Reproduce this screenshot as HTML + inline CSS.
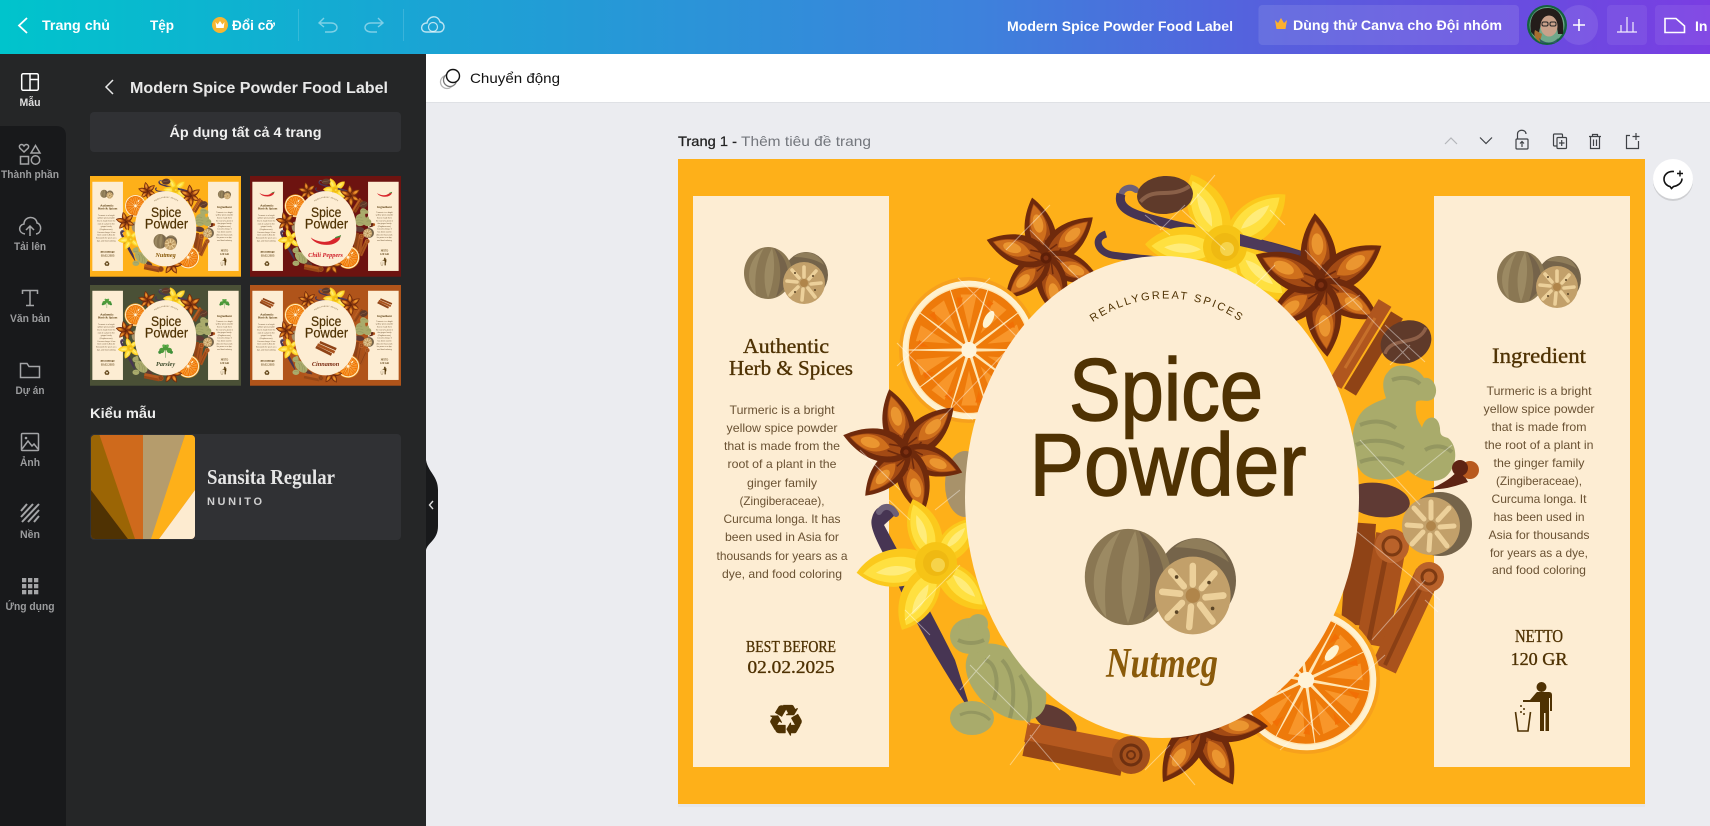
<!DOCTYPE html>
<html lang="vi"><head><meta charset="utf-8"><title>Modern Spice Powder Food Label</title>
<style>
html,body{margin:0;padding:0;width:1710px;height:826px;overflow:hidden;background:#ebecf0}
svg{display:block}
text{font-family:"Liberation Sans","Noto Sans CJK SC",sans-serif}
.sf{font-family:"Liberation Serif","Noto Serif CJK SC",serif}
.dj{font-family:"DejaVu Sans",sans-serif}
.nav{font-size:11px;font-weight:700;fill:#9b9c9e;text-anchor:middle}
.ni{fill:none;stroke:#a4a5a7;stroke-width:1.5}
.tb{fill:#fff;font-size:14px;font-weight:700}
.b{font-size:12px;fill:#6a5233;text-anchor:middle}
.h{fill:#4f3203;text-anchor:middle;stroke:#4f3203;stroke-width:.35}
</style></head><body>
<svg xmlns="http://www.w3.org/2000/svg" width="1710" height="826" viewBox="0 0 1710 826">
<defs>
<linearGradient id="top" x1="0" x2="1" y1="0" y2="0">
<stop offset="0" stop-color="#00c4cc"/><stop offset=".25" stop-color="#1aa4d4"/><stop offset=".57" stop-color="#3d82dc"/><stop offset=".74" stop-color="#5660dd"/><stop offset=".9" stop-color="#6a4be0"/><stop offset="1" stop-color="#7a3de2"/>
</linearGradient>
<g id="pod">
<path d="M0,10C-32,-12 -34,-58 0,-100C34,-58 32,-12 0,10Z" fill="#6f2a0c"/>
<path d="M-2,-4C-20,-22 -22,-58 0,-90C22,-58 20,-22 -2,-4Z" fill="#a34a14"/>
<path d="M0,-26C-16,-42 -17,-62 0,-88C17,-62 16,-42 0,-26Z" fill="#cf6f1c"/>
<ellipse cx="0" cy="-57" rx="8" ry="15" fill="#eb9630"/>
<path d="M-7,-6L-5,-28M7,-6L5,-28" stroke="#6f2a0c" stroke-width="2.500"/>
</g>
<g id="star">
<use href="#pod"/><use href="#pod" transform="rotate(62)"/><use href="#pod" transform="rotate(125) scale(.92)"/><use href="#pod" transform="rotate(180)"/><use href="#pod" transform="rotate(238) scale(.92)"/><use href="#pod" transform="rotate(300)"/>
<circle r="9" fill="#5d1f08"/><circle r="4" fill="#7d3012"/>
</g>
<g id="seg"><path d="M0,-7L-26,-82A86,86 0 0 1 26,-82Z" fill="#ee7a0a"/><path d="M0,-28L-12,-76L11,-76Z" fill="#f8962a"/><path d="M-14,-56L-18,-72L-9,-72Z" fill="#f26f05"/></g>
<g id="orange">
<circle r="100" fill="#f7a11c"/><circle r="95" fill="#fff1cf"/><circle r="88" fill="#ffe6b4"/>
<use href="#seg"/><use href="#seg" transform="rotate(36)"/><use href="#seg" transform="rotate(72)"/><use href="#seg" transform="rotate(108)"/><use href="#seg" transform="rotate(144)"/><use href="#seg" transform="rotate(180)"/><use href="#seg" transform="rotate(216)"/><use href="#seg" transform="rotate(252)"/><use href="#seg" transform="rotate(288)"/><use href="#seg" transform="rotate(324)"/>
<circle r="11" fill="#fff3d8"/>
<ellipse cx="28" cy="-42" rx="6" ry="13" fill="#fff3d0" transform="rotate(30 28 -42)"/>
</g>
<g id="pet">
<path d="M0,0C-30,-20 -33,-70 0,-100C33,-70 30,-20 0,0Z" fill="#fbc91c"/>
<path d="M-3,-10C-24,-30 -24,-65 -2,-92C20,-66 18,-30 -3,-10Z" fill="#ffe040"/>
<path d="M-4,-30C-12,-45 -10,-62 -3,-76C5,-60 4,-45 -4,-30Z" fill="#ffec7a"/>
</g>
<g id="nut">
<ellipse cx="38" cy="2" rx="22" ry="23" fill="#75644a"/>
<path d="M26,-16C34,-24 50,-22 56,-8C48,-14 36,-16 26,-16Z" fill="#8f7d5a"/>
<ellipse cx="0" cy="0" rx="24" ry="26" fill="#8a7753"/>
<path d="M-4,-25C-20,-14 -24,8 -12,22C-14,6 -12,-12 -4,-25ZM4,-25C-4,-10 -6,8 0,25C6,10 8,-10 4,-25Z" fill="#9c8a63"/>
<path d="M6,-25C16,-18 22,-6 20,10C16,16 12,20 8,24C14,6 14,-10 6,-25Z" fill="#75634a"/>
<circle cx="36" cy="10" r="21" fill="#c2a06a"/>
<g stroke="#ecd09a" stroke-width="3.600" stroke-linecap="round"><path d="M36,4V-6M41,6L48,-2M43,11L53,10M40,15L47,24M35,16L34,27M30,14L22,22M29,9L19,8M31,5L24,-3"/></g>
<circle cx="36" cy="10" r="4" fill="#b0854a"/>
<circle cx="27" cy="0" r="1" fill="#5b4526"/><circle cx="47" cy="17" r="1" fill="#5b4526"/><circle cx="45" cy="3" r="1" fill="#5b4526"/><circle cx="27" cy="19" r="1" fill="#5b4526"/>
</g>
<g id="art">
<!-- pods -->
<path d="M1121,196C1122,187 1131,186 1136,190" fill="none" stroke="#6d6078" stroke-width="6" stroke-linecap="round"/>
<path d="M1121,194C1116,212 1140,216 1170,224C1200,232 1240,236 1303,256" fill="none" stroke="#473553" stroke-width="9"/>
<path d="M1106,234C1093,238 1097,252 1112,255C1130,258 1150,258 1170,262" fill="none" stroke="#473553" stroke-width="7"/>
<use href="#star" transform="translate(1046,258) rotate(-13) scale(.62)"/>
<g transform="translate(969,350) scale(.7,.73)"><use href="#orange"/></g>
<!-- flower 1 -->
<g transform="translate(1225,247)">
<use href="#pet" transform="rotate(-25) scale(.8)"/><use href="#pet" transform="rotate(49) scale(.8)"/><use href="#pet" transform="rotate(-88) scale(.8)"/><use href="#pet" transform="rotate(130) scale(.8)"/><use href="#pet" transform="rotate(180) scale(.7)"/>
<circle r="22" fill="#f6c416"/><circle r="14" fill="#efb912"/><circle cx="2" cy="2" r="7" fill="#f6d34a"/>
</g>
<!-- bean 1 -->
<g transform="rotate(-4 1165 195)"><ellipse cx="1165" cy="195" rx="28" ry="19" fill="#5f3a2a"/><path d="M1140,200C1155,185 1170,200 1190,188" fill="none" stroke="#8a6048" stroke-width="4"/></g>
<path d="M1240,234L1303,252L1292,258L1240,246Z" fill="#4d3a5a"/>
<use href="#star" transform="translate(1321,285) rotate(-5) scale(.72)"/>
<!-- cinnamon right upper -->
<path d="M1385,303L1335,385" stroke="#b0561e" stroke-width="15"/><path d="M1397,315L1350,392" stroke="#8f4316" stroke-width="14"/><path d="M1375,318L1345,368" stroke="#c66f2a" stroke-width="3"/>
<!-- bean 2 -->
<g transform="rotate(-22 1406 342)"><ellipse cx="1406" cy="342" rx="26" ry="21" fill="#5f3a2a"/><path d="M1382,345C1395,330 1415,352 1430,336" fill="none" stroke="#8e6048" stroke-width="3.500"/></g>
<!-- bean 3 -->
<ellipse cx="1378" cy="500" rx="32" ry="17" fill="#5f3a34" transform="rotate(8 1378 500)"/>
<!-- cinnamon 3 -->
<path d="M1362,523L1355,625" stroke="#8f4316" stroke-width="28"/>
<path d="M1392,535L1372,645" stroke="#a9521c" stroke-width="32"/><path d="M1388,545L1369,640" stroke="#8a3f14" stroke-width="5"/>
<circle cx="1392" cy="546" r="17" fill="#b9622a"/><circle cx="1392" cy="546" r="9" fill="none" stroke="#7d3a12" stroke-width="3"/>
<path d="M1428,574L1384,668" stroke="#a9521c" stroke-width="26"/><path d="M1420,590L1385,665" stroke="#8a3f14" stroke-width="4"/>
<circle cx="1429" cy="577" r="15" fill="#b9622a"/><circle cx="1429" cy="577" r="7" fill="none" stroke="#7d3a12" stroke-width="3"/>
<!-- ginger right -->
<path d="M1388,372C1396,360 1418,366 1424,378C1432,376 1440,388 1434,398C1428,404 1420,398 1416,402C1414,420 1422,425 1422,428C1424,416 1438,412 1440,428C1440,436 1442,436 1448,438C1460,448 1456,470 1444,478C1430,486 1414,476 1408,470C1396,482 1370,484 1360,470C1348,454 1350,420 1366,408C1378,400 1384,400 1386,398C1382,388 1382,378 1388,372Z" fill="#a9ab6b"/>
<path d="M1360,425C1372,420 1385,420 1396,428M1356,445C1370,438 1390,440 1404,448M1360,462C1375,456 1392,458 1404,464M1392,380C1402,376 1414,378 1420,384M1425,450C1435,444 1445,446 1452,452" fill="none" stroke="#949760" stroke-width="4"/>
<!-- clove -->
<path d="M1431,489C1445,482 1452,478 1460,468L1468,482C1455,486 1445,490 1431,489Z" fill="#5e2413"/><circle cx="1470" cy="470" r="9" fill="#b85a1e"/><circle cx="1460" cy="468" r="8" fill="#5e2413"/>
<!-- right nut -->
<circle cx="1440" cy="524" r="32" fill="#75644a"/>
<circle cx="1431" cy="526" r="29" fill="#c2a06a"/>
<g stroke="#ecd09a" stroke-width="5" stroke-linecap="round"><path d="M1431,518V502M1438,520L1449,508M1440,527L1454,526M1437,533L1447,546M1430,535L1429,550M1423,532L1412,544M1421,526L1407,525M1424,519L1414,508"/></g>
<circle cx="1431" cy="526" r="5" fill="#b0854a"/>
<!-- orange 2 -->
<g transform="translate(1306,680) scale(.74) rotate(10)"><use href="#orange"/></g>
<use href="#star" transform="translate(1200,725) rotate(151) scale(.68)"/>
<!-- star C -->
<ellipse cx="965" cy="484" rx="20" ry="33" fill="#a8926a"/>
<use href="#star" transform="translate(906,452) rotate(-15) scale(.65)"/>
<!-- left pod -->
<path d="M895,515C887,501 875,505 872,518C868,530 884,552 896,580C915,625 950,680 972,714L955,660C925,600 900,555 884,525" fill="#473553"/>
<path d="M879,512C884,504 892,506 896,514" fill="none" stroke="#6d6078" stroke-width="6" stroke-linecap="round"/>
<!-- flower 2 -->
<g transform="translate(936,563)">
<use href="#pet" transform="rotate(-20) scale(.68)"/><use href="#pet" transform="rotate(-97) scale(.8)"/><use href="#pet" transform="rotate(207) scale(.75)"/><use href="#pet" transform="rotate(42) scale(.6)"/><use href="#pet" transform="rotate(133) scale(.68)"/>
<circle r="21" fill="#f6c416"/><circle r="13" fill="#efb912"/><circle cx="2" cy="2" r="7" fill="#f6d34a"/>
</g>
<ellipse cx="1055" cy="720" rx="24" ry="12" fill="#5f3a34" transform="rotate(30 1055 720)"/>
<!-- ginger left -->
<ellipse cx="1006" cy="682" rx="47" ry="30" fill="#a9ab6b" transform="rotate(42 1006 682)"/>
<ellipse cx="970" cy="636" rx="20" ry="18" fill="#a9ab6b"/>
<ellipse cx="972" cy="718" rx="22" ry="17" fill="#a9ab6b"/>
<circle cx="978" cy="624" r="10" fill="#a9ab6b"/>
<path d="M985,660C995,662 1000,680 994,700M1002,660C1014,672 1016,695 1010,718M1020,675C1030,690 1032,705 1028,722M958,640C966,644 976,644 984,640" fill="none" stroke="#949760" stroke-width="4"/>
<path d="M960,715C970,710 982,712 990,720" fill="none" stroke="#949760" stroke-width="3"/>
<!-- cinnamon bottom -->
<path d="M1026,732L1130,752" stroke="#b5591f" stroke-width="20"/><path d="M1024,748L1122,768" stroke="#974716" stroke-width="16"/>
<circle cx="1131" cy="755" r="19" fill="#a3501c"/><circle cx="1131" cy="755" r="10" fill="none" stroke="#6e3010" stroke-width="3"/><circle cx="1131" cy="755" r="4" fill="none" stroke="#6e3010" stroke-width="2"/>
</g>
<g id="lat" stroke="#fff" stroke-opacity=".42" stroke-width="1" fill="none">
<path d="M897,343L973,420M897,366L990,278M958,278L1020,340M940,420L1012,345"/>
<path d="M1030,230L1090,290M1006,250L1050,205M1145,215L1170,235M1160,230L1185,205"/>
<path d="M1215,175L1190,205M1182,210L1225,250M1275,265L1250,290M1270,210L1285,225"/>
<path d="M1305,250L1410,360M1310,330L1360,295M1390,365L1410,345M1385,325L1425,362M1360,440L1420,505M1415,475L1452,445"/>
<path d="M1355,530L1440,600M1372,640L1425,580M1425,600L1438,612M1280,750L1385,655M1250,655L1320,735"/>
<path d="M1145,770L1170,745M1040,725L1010,765M1030,735L1060,770M1170,755L1195,785"/>
<path d="M889,500L910,520M860,450L900,490M935,510L960,490M905,620L960,565M905,610L930,635M960,690L990,655M970,665L1030,725"/>
</g>
<g id="pan">
<rect x="693" y="196" width="196" height="571" fill="#fdedd3"/>
<rect x="1434" y="196" width="196" height="571" fill="#fdedd3"/>
</g>
<g id="txt">
<ellipse cx="1162" cy="497" rx="197" ry="241" fill="#fdedd3"/>
<text class="sf h" x="786" y="353" font-size="21" textLength="86" lengthAdjust="spacingAndGlyphs">Authentic</text>
<text class="sf h" x="791" y="375" font-size="21" textLength="124" lengthAdjust="spacingAndGlyphs">Herb &amp; Spices</text>
<text class="b" x="782" y="414" textLength="105" lengthAdjust="spacingAndGlyphs">Turmeric is a bright</text>
<text class="b" x="782" y="432" textLength="111" lengthAdjust="spacingAndGlyphs">yellow spice powder</text>
<text class="b" x="782" y="450" textLength="116" lengthAdjust="spacingAndGlyphs">that is made from the</text>
<text class="b" x="782" y="468" textLength="109" lengthAdjust="spacingAndGlyphs">root of a plant in the</text>
<text class="b" x="782" y="487" textLength="70" lengthAdjust="spacingAndGlyphs">ginger family</text>
<text class="b" x="782" y="505" textLength="85" lengthAdjust="spacingAndGlyphs">(Zingiberaceae),</text>
<text class="b" x="782" y="523" textLength="117" lengthAdjust="spacingAndGlyphs">Curcuma longa. It has</text>
<text class="b" x="782" y="541" textLength="114" lengthAdjust="spacingAndGlyphs">been used in Asia for</text>
<text class="b" x="782" y="560" textLength="131" lengthAdjust="spacingAndGlyphs">thousands for years as a</text>
<text class="b" x="782" y="578" textLength="120" lengthAdjust="spacingAndGlyphs">dye, and food coloring</text>
<text class="sf h" x="791" y="652" font-size="17" textLength="90" lengthAdjust="spacingAndGlyphs">BEST BEFORE</text>
<text class="sf h" x="791" y="673" font-size="18" textLength="87" lengthAdjust="spacingAndGlyphs">02.02.2025</text>
<text class="dj h" x="786" y="735" font-size="42" style="stroke-width:1.1">♻</text>
<text class="sf h" x="1539" y="363" font-size="22" textLength="94" lengthAdjust="spacingAndGlyphs">Ingredient</text>
<text class="b" x="1539" y="395" textLength="105" lengthAdjust="spacingAndGlyphs">Turmeric is a bright</text>
<text class="b" x="1539" y="413" textLength="111" lengthAdjust="spacingAndGlyphs">yellow spice powder</text>
<text class="b" x="1539" y="431" textLength="95" lengthAdjust="spacingAndGlyphs">that is made from</text>
<text class="b" x="1539" y="449" textLength="109" lengthAdjust="spacingAndGlyphs">the root of a plant in</text>
<text class="b" x="1539" y="467" textLength="91" lengthAdjust="spacingAndGlyphs">the ginger family</text>
<text class="b" x="1539" y="485" textLength="86" lengthAdjust="spacingAndGlyphs">(Zingiberaceae),</text>
<text class="b" x="1539" y="503" textLength="95" lengthAdjust="spacingAndGlyphs">Curcuma longa. It</text>
<text class="b" x="1539" y="521" textLength="91" lengthAdjust="spacingAndGlyphs">has been used in</text>
<text class="b" x="1539" y="539" textLength="101" lengthAdjust="spacingAndGlyphs">Asia for thousands</text>
<text class="b" x="1539" y="557" textLength="98" lengthAdjust="spacingAndGlyphs">for years as a dye,</text>
<text class="b" x="1539" y="574" textLength="94" lengthAdjust="spacingAndGlyphs">and food coloring</text>
<text class="sf h" x="1539" y="642" font-size="18" textLength="48" lengthAdjust="spacingAndGlyphs">NETTO</text>
<text class="sf h" x="1539" y="665" font-size="18" textLength="57" lengthAdjust="spacingAndGlyphs">120 GR</text>
<g fill="#4f3203">
<circle cx="1541.5" cy="687" r="5"/>
<path d="M1537,692H1549Q1552,692 1552,695V711H1550V698H1549V731H1545.500V713H1544V731H1540V702L1531,702H1523V700H1530L1536,693Z"/>
<circle cx="1521" cy="706" r="1"/><circle cx="1524" cy="709" r="1"/><circle cx="1521" cy="712" r="1"/><circle cx="1524" cy="714" r="1"/>
</g>
<path d="M1515.500,712L1518,731H1528L1530.500,712" fill="none" stroke="#4f3203" stroke-width="1.6"/>
<path id="arc" d="M1089,325A128,128 0 0 1 1245,325" fill="none"/>
<text font-size="11" fill="#4f3203" letter-spacing="2" text-anchor="middle"><textPath href="#arc" startOffset="50%">REALLYGREAT SPICES</textPath></text>
<text class="h" x="1166" y="420" font-size="88" textLength="194" lengthAdjust="spacingAndGlyphs" style="stroke-width:1.4">Spice</text>
<text class="h" x="1168" y="495" font-size="88" textLength="277" lengthAdjust="spacingAndGlyphs" style="stroke-width:1.4">Powder</text>
</g>
<g id="chili"><path d="M1067,552C1100,580 1170,590 1200,570C1220,555 1240,550 1260,540L1252,565C1240,580 1220,600 1170,600C1120,600 1080,580 1067,552Z" fill="#d8262c"/><path d="M1222,552C1232,545 1245,545 1262,536L1255,552C1245,550 1235,556 1228,560Z" fill="#3f8f3a"/></g>
<g id="pars"><path d="M1162,625V570" stroke="#3f8f3a" stroke-width="3"/><circle cx="1162" cy="560" r="18" fill="#4e9a3a"/><circle cx="1138" cy="578" r="17" fill="#4e9a3a"/><circle cx="1186" cy="578" r="17" fill="#4e9a3a"/><circle cx="1125" cy="590" r="10" fill="#3f8f3a"/><circle cx="1199" cy="590" r="10" fill="#3f8f3a"/><circle cx="1150" cy="548" r="9" fill="#5cab48"/><circle cx="1174" cy="548" r="9" fill="#5cab48"/></g>
<g id="cinn"><path d="M1100,555L1200,605" stroke="#8f4316" stroke-width="18"/><path d="M1110,540L1220,590" stroke="#a9521c" stroke-width="18"/><path d="M1125,525L1230,570" stroke="#8f4316" stroke-width="16"/></g>
</defs>

<!-- base -->
<rect width="1710" height="826" fill="#ebecf0"/>
<rect width="1710" height="54" fill="url(#top)"/>
<rect x="426" y="54" width="1284" height="48" fill="#fff"/>
<rect x="426" y="102" width="1284" height="1" fill="#dfe1e5"/>
<!-- panels -->
<rect x="0" y="54" width="426" height="772" fill="#252627"/>
<path d="M0,126H56Q66,126 66,136V826H0Z" fill="#18191b"/>
<path d="M426,460C428,472 438,476 438,490V526C438,540 428,542 426,550Z" fill="#18191b"/>
<path d="M433,501L429.500,505L433,509" fill="none" stroke="#ddd" stroke-width="1.4"/>

<!-- topbar left -->
<path d="M27,18L19,25.500L27,33" fill="none" stroke="#fff" stroke-width="1.8"/>
<text class="tb" x="42" y="30" textLength="68" lengthAdjust="spacingAndGlyphs">Trang chủ</text>
<text class="tb" x="150" y="30" textLength="24" lengthAdjust="spacingAndGlyphs">Tệp</text>
<circle cx="220" cy="25" r="8" fill="#f6b632"/>
<path d="M215.500,22L217.600,24.500L220,21L222.400,24.500L224.500,22L223.700,28H216.300Z" fill="#fff"/>
<text class="tb" x="232" y="30" textLength="43" lengthAdjust="spacingAndGlyphs">Đổi cỡ</text>
<rect x="298" y="9" width="1" height="32" fill="#fff" opacity=".15"/>
<rect x="403" y="9" width="1" height="32" fill="#fff" opacity=".15"/>
<path d="M324,18L319,23L324,27M319,23H331C339,23 339,32 331,32H325" fill="none" stroke="#fff" stroke-opacity=".45" stroke-width="1.4"/>
<path d="M378,18L383,23L378,27M383,23H371C363,23 363,32 371,32H377" fill="none" stroke="#fff" stroke-opacity=".45" stroke-width="1.4"/>
<path d="M426,32C420,32 420,23 427,23C428,16 438,14 440,22C446,23 445,32 439,32Z" fill="none" stroke="#fff" stroke-opacity=".7" stroke-width="1.4"/>
<circle cx="433" cy="27" r="4.500" fill="none" stroke="#fff" stroke-opacity=".7" stroke-width="1.2"/>

<!-- topbar right -->
<text class="tb" x="1007" y="31" textLength="226" lengthAdjust="spacingAndGlyphs">Modern Spice Powder Food Label</text>
<rect x="1258.500" y="5" width="260.500" height="40" rx="4" fill="#fff" opacity=".1"/>
<path d="M1275,20L1278,23L1281,18L1284,23L1287,20L1285.500,29H1276.500Z" fill="#fcb02f"/>
<text class="tb" x="1293" y="30" textLength="209" lengthAdjust="spacingAndGlyphs">Dùng thử Canva cho Đội nhóm</text>
<rect x="1560" y="5" width="38" height="40" rx="19" fill="#fff" opacity=".1"/>
<path d="M1579,19V31M1573,25H1585" stroke="#fff" stroke-width="1.6"/>
<ellipse cx="1547" cy="25" rx="20" ry="20" fill="#14633f"/>
<ellipse cx="1547" cy="25" rx="17.500" ry="18" fill="#6fa88a"/>
<path d="M1531,32C1528,14 1538,8 1548,8C1558,8 1565,16 1563,34L1558,34C1557,22 1552,16 1545,17C1541,22 1539,30 1538,40Z" fill="#241d1a"/>
<ellipse cx="1549" cy="26" rx="8.500" ry="10.500" fill="#c9a18a"/>
<path d="M1535,30C1533,36 1536,40 1540,42L1542,34Z" fill="#a86f30"/>
<path d="M1539,38C1545,44 1553,44 1558,38L1556,43H1541Z" fill="#2f5d62"/>
<rect x="1542" y="22" width="6" height="4" rx="1.500" fill="none" stroke="#222" stroke-width="1"/><rect x="1550" y="22" width="6" height="4" rx="1.500" fill="none" stroke="#222" stroke-width="1"/>
<rect x="1607" y="5" width="40" height="40" rx="4" fill="#fff" opacity=".07"/>
<path d="M1617,32H1637M1621,32V25M1627,32V17M1633,32V22" fill="none" stroke="#fff" stroke-width="1.2" stroke-opacity=".9"/>
<rect x="1655" y="5" width="60" height="40" rx="4" fill="#fff" opacity=".07"/>
<path d="M1665,18.500H1676L1684.500,26V32.500H1665Z" fill="none" stroke="#fff" stroke-width="1.6"/>
<text class="tb" x="1695" y="31">In</text>

<!-- nav -->
<rect x="21.700" y="73.700" width="16.600" height="16.600" rx="1.500" fill="none" stroke="#fff" stroke-width="1.500"/>
<path d="M30,74V90M30,79.500H38" fill="none" stroke="#fff" stroke-width="1.500"/>
<text class="nav" x="30" y="106" style="fill:#dfdfdf" textLength="21" lengthAdjust="spacingAndGlyphs">Mẫu</text>
<path class="ni" d="M24,152L19.800,148C18,145 22,143 24,146C26,143 30,145 28.200,148Z"/>
<path class="ni" d="M35.500,145.500L40,153H31Z"/>
<rect class="ni" x="20.500" y="156.500" width="8" height="7.500"/><circle class="ni" cx="35.500" cy="160" r="4.200"/>
<text class="nav" x="30" y="178" textLength="58" lengthAdjust="spacingAndGlyphs">Thành phần</text>
<path class="ni" d="M25,234C18,233 18,225 24,224C24,216 36,215 37,223C42,224 42,233 36,234"/>
<path class="ni" d="M30,236V226M26,230L30,226L34,230"/>
<text class="nav" x="30" y="250" textLength="32" lengthAdjust="spacingAndGlyphs">Tải lên</text>
<path class="ni" d="M22.500,294V290.500H37.500V294M30,290.500V305.500M26,305.500H34"/>
<text class="nav" x="30" y="322" textLength="40" lengthAdjust="spacingAndGlyphs">Văn bản</text>
<path class="ni" d="M20.500,377.500V363.500H27L29,366.500H39.500V377.500Z"/>
<text class="nav" x="30" y="394" textLength="29" lengthAdjust="spacingAndGlyphs">Dự án</text>
<rect class="ni" x="21.500" y="433.500" width="17" height="17" rx="1"/><circle cx="26" cy="438" r="1.300" fill="#a4a5a7"/>
<path class="ni" d="M22,449L28,441L32,446L34,444L38,449"/>
<text class="nav" x="30" y="466" textLength="20" lengthAdjust="spacingAndGlyphs">Ảnh</text>
<path d="M21,511L27,504M21,517L33,504M22,522L39,504M28,522L39,510M34,522L39,516" fill="none" stroke="#a4a5a7" stroke-width="2"/>
<text class="nav" x="30" y="538" textLength="20" lengthAdjust="spacingAndGlyphs">Nền</text>
<g fill="#a4a5a7"><rect x="22" y="578" width="4.300" height="4.300"/><rect x="28" y="578" width="4.300" height="4.300"/><rect x="34" y="578" width="4.300" height="4.300"/><rect x="22" y="584" width="4.300" height="4.300"/><rect x="28" y="584" width="4.300" height="4.300"/><rect x="34" y="584" width="4.300" height="4.300"/><rect x="22" y="590" width="4.300" height="4.300"/><rect x="28" y="590" width="4.300" height="4.300"/><rect x="34" y="590" width="4.300" height="4.300"/></g>
<text class="nav" x="30" y="610" textLength="49" lengthAdjust="spacingAndGlyphs">Ứng dụng</text>

<!-- side panel -->
<path d="M113,80L106,87L113,94" fill="none" stroke="#e8e8e8" stroke-width="1.500"/>
<text x="130" y="93" font-size="16" font-weight="700" fill="#e8e8e8" textLength="258" lengthAdjust="spacingAndGlyphs">Modern Spice Powder Food Label</text>
<rect x="90" y="112" width="311" height="40" rx="4" fill="#303134"/>
<text x="245.500" y="137" font-size="14" font-weight="700" fill="#f0f0f0" text-anchor="middle" textLength="152" lengthAdjust="spacingAndGlyphs">Áp dụng tất cả 4 trang</text>

<!-- thumb 1 -->
<g transform="translate(90,176) scale(.15615) translate(-678,-159)">
<rect x="678" y="159" width="967" height="645" fill="#feb019"/><use href="#pan"/><use href="#art"/><use href="#txt"/>
<g transform="translate(1128,577) scale(1.8)"><use href="#nut"/></g><use href="#nut" transform="translate(768,273)"/><use href="#nut" transform="translate(1521,277)"/>
<text class="sf" x="1162" y="677" font-size="40" font-weight="700" font-style="italic" fill="#8a5a0a" text-anchor="middle">Nutmeg</text>
</g>
<!-- thumb 2 -->
<g transform="translate(250,176) scale(.15615) translate(-678,-159)">
<rect x="678" y="159" width="967" height="645" fill="#6d1310"/><use href="#pan"/><use href="#art"/><use href="#txt"/>
<use href="#chili"/><use href="#chili" transform="translate(786,275) scale(.5) translate(-1162,-570)"/><use href="#chili" transform="translate(1539,277) scale(.5) translate(-1162,-570)"/>
<text class="sf" x="1162" y="677" font-size="40" font-weight="700" font-style="italic" fill="#d0202a" text-anchor="middle">Chili Peppers</text>
</g>
<!-- thumb 3 -->
<g transform="translate(90,285) scale(.15615) translate(-678,-159)">
<rect x="678" y="159" width="967" height="645" fill="#4a5036"/><use href="#pan"/><use href="#art"/><use href="#txt"/>
<use href="#pars"/><use href="#pars" transform="translate(786,275) scale(.7) translate(-1162,-580)"/><use href="#pars" transform="translate(1539,277) scale(.7) translate(-1162,-580)"/>
<text class="sf" x="1162" y="677" font-size="40" font-weight="700" font-style="italic" fill="#3c4a2a" text-anchor="middle">Parsley</text>
</g>
<!-- thumb 4 -->
<g transform="translate(250,285) scale(.15615) translate(-678,-159)">
<rect x="678" y="159" width="967" height="645" fill="#b0541a"/><use href="#pan"/><use href="#art"/><use href="#txt"/>
<use href="#cinn"/><use href="#cinn" transform="translate(786,275) scale(.7) translate(-1162,-565)"/><use href="#cinn" transform="translate(1539,277) scale(.7) translate(-1162,-565)"/>
<text class="sf" x="1162" y="677" font-size="40" font-weight="700" font-style="italic" fill="#7a2a10" text-anchor="middle">Cinnamon</text>
</g>

<text x="90" y="418" font-size="14" font-weight="700" fill="#eee" textLength="66" lengthAdjust="spacingAndGlyphs">Kiểu mẫu</text>
<rect x="90" y="434" width="311" height="106" rx="4" fill="#303134"/>
<clipPath id="sw"><rect x="91" y="435" width="104" height="104" rx="4"/></clipPath>
<g clip-path="url(#sw)">
<rect x="91" y="435" width="104" height="104" fill="#cf6a1c"/>
<path d="M91,435H99.500L135,539H128L91,490Z" fill="#9b6505"/>
<path d="M91,490L128,539H91Z" fill="#4f3203"/>
<path d="M143,435H185L152,539H143Z" fill="#b59c6c"/>
<path d="M185,435H195V490L159,539H151Z" fill="#feb019"/>
<path d="M195,490V539H159Z" fill="#fdebd0"/>
</g>
<text class="sf" x="207" y="484" font-size="21" font-weight="700" fill="#e6e6e6" textLength="128" lengthAdjust="spacingAndGlyphs">Sansita Regular</text>
<text x="207" y="505" font-size="11" font-weight="700" fill="#d0d0d0" textLength="55" lengthAdjust="spacing">NUNITO</text>

<!-- white bar -->
<circle cx="447" cy="82" r="6.500" fill="none" stroke="#b3b3b3" stroke-width="1.300"/>
<circle cx="450" cy="80" r="6.500" fill="#fff" stroke="#777" stroke-width="1.300"/>
<circle cx="453" cy="76" r="6.500" fill="#fff" stroke="#111" stroke-width="1.400"/>
<text x="470" y="83" font-size="14" fill="#111" textLength="90" lengthAdjust="spacingAndGlyphs">Chuyển động</text>

<!-- header over canvas -->
<text x="678" y="146" font-size="14" fill="#222" stroke="#222" stroke-width=".25" textLength="59" lengthAdjust="spacingAndGlyphs">Trang 1 -</text>
<text x="741" y="146" font-size="14" fill="#73767c" textLength="130" lengthAdjust="spacingAndGlyphs">Thêm tiêu đề trang</text>
<g fill="none" stroke="#3f4246" stroke-width="1.200">
<path d="M1445,144L1451,138L1457,144" stroke="#b4b6ba"/>
<path d="M1480,137.500L1486,143.500L1492,137.500"/>
<path d="M1517.500,139V134C1517.500,129 1526,129 1526,134"/><rect x="1516" y="139" width="12" height="10" rx="1"/><path d="M1522,141.500V147M1520,143.500L1522,141.500L1524,143.500"/>
<rect x="1553.500" y="134" width="9" height="12" rx="1"/><rect x="1557" y="137.500" width="9.500" height="11" rx="1" fill="#ebecf0"/><path d="M1561.700,140V146M1559,143H1564.500"/>
<path d="M1589,136.500H1601M1592.500,136.500V134.500H1597.500V136.500M1590.500,136.500V148.500H1599.500V136.500M1593.500,139.500V146M1596.500,139.500V146"/>
<path d="M1630,135.500H1626.500V148.500H1638.500V141M1636,133V140M1632.500,136.500H1639.500"/>
</g>

<!-- canvas -->
<rect x="678" y="160" width="967" height="647" fill="#000" opacity=".025"/>
<rect x="678" y="159" width="967" height="645" fill="#feb019"/>
<use href="#pan"/><use href="#art"/><use href="#lat"/><use href="#txt"/>
<g transform="translate(1128,577) scale(1.8,1.85)"><use href="#nut"/></g>
<use href="#nut" transform="translate(768,273)"/>
<use href="#nut" transform="translate(1521,277)"/>
<text class="sf" x="1162" y="677" font-size="42" font-weight="700" font-style="italic" fill="#8a5a0a" text-anchor="middle" textLength="112" lengthAdjust="spacingAndGlyphs">Nutmeg</text>

<!-- comment -->
<circle cx="1673" cy="181" r="20" fill="#000" opacity=".12"/>
<circle cx="1673" cy="179" r="20" fill="#fff"/>
<path d="M1674,171.500C1667,171 1664,175.500 1664,179C1664,183 1667,186 1670,186.500L1671.500,188.500L1673.500,186.500C1677,186 1682,183.500 1682,178.500" fill="none" stroke="#111" stroke-width="1.600"/>
<path d="M1680,170.500V176.500M1677,173.500H1683" stroke="#111" stroke-width="1.400"/>
</svg>
</body></html>
